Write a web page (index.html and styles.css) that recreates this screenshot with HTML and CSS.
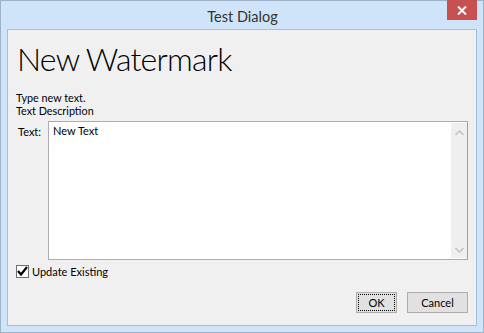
FILE: index.html
```html
<!DOCTYPE html>
<html>
<head>
<meta charset="utf-8">
<link rel="stylesheet" href="styles.css">
</head>
<body>
<div class="window">
  <div class="titlebar">
    <div class="title">Test Dialog</div>
    <div class="close"><svg width="10" height="9" viewBox="0 0 10 9"><path d="M1 0.5 L9 8.5 M9 0.5 L1 8.5" stroke="#fff" stroke-width="2"/></svg></div>
  </div>
  <div class="client">
    <h1 class="heading">New Watermark</h1>
    <div class="desc">
      <div class="line">Type new text.</div>
      <div class="line">Text Description</div>
    </div>
    <div class="field">
      <div class="label">Text:</div>
      <div class="textbox">
        <div class="content">New Text</div>
        <div class="scrollbar">
          <svg width="9" height="6" viewBox="0 0 9 6"><path d="M0.5 5 L4.5 1 L8.5 5" fill="none" stroke="#c4c4c4" stroke-width="1.6"/></svg>
          <svg width="9" height="6" viewBox="0 0 9 6"><path d="M0.5 1 L4.5 5 L8.5 1" fill="none" stroke="#c4c4c4" stroke-width="1.6"/></svg>
        </div>
      </div>
    </div>
    <label class="check">
      <span class="box"><svg width="11" height="10" viewBox="0 0 11 10"><path d="M1 5 L4 8.5 L10 1" fill="none" stroke="#000" stroke-width="2.2"/></svg></span>
      <span>Update Existing</span>
    </label>
    <div class="buttons">
      <div class="btn ok">OK</div>
      <div class="btn cancel">Cancel</div>
    </div>
  </div>
</div>
</body>
</html>
```
FILE: styles.css
```css
html, body {
  margin: 0;
  padding: 0;
  width: 484px;
  height: 333px;
  overflow: hidden;
  font-family: "Lato", "Open Sans", sans-serif;
  font-size: 11px;
  color: #000;
}
.window {
  box-sizing: border-box;
  width: 484px;
  height: 333px;
  background: #cfe4f8;
  border: 1px solid #9fb3c8;
  display: flex;
  flex-direction: column;
  padding: 0 6px 6px 6px;
}
.titlebar {
  height: 28px;
  display: flex;
  justify-content: center;
  align-items: center;
  position: relative;
}
.title {
  font-size: 14.5px;
  color: #333;
  margin-top: 2px;
  margin-left: 1px;
}
.close {
  position: absolute;
  right: 0;
  top: -1px;
  width: 30px;
  height: 20px;
  background: #c75050;
  display: flex;
  justify-content: center;
  align-items: center;
}
.client {
  flex: 1;
  background: #f0f0f0;
  border: 1px solid #a8bed5;
  padding: 0 8px 0 8px;
  display: flex;
  flex-direction: column;
}
.heading {
  margin: 9px 0 0 1px;
  font-weight: 300;
  font-size: 32px;
  line-height: 40px;
  letter-spacing: -0.8px;
  color: #000;
}
.desc {
  margin-top: 12px;
  display: flex;
  flex-direction: column;
  gap: 0.5px;
}
.line {
  height: 12.5px;
  line-height: 13px;
  font-size: 10.8px;
}
.field {
  display: flex;
  margin-top: 4px;
}
.label {
  width: 32px;
  padding: 4px 0 0 2px;
  box-sizing: border-box;
}
.textbox {
  box-sizing: border-box;
  width: 420px;
  height: 139px;
  border: 1px solid #abadb3;
  border-right-color: #a0a0a0;
  background: #fff;
  display: flex;
}
.content {
  flex: 1;
  padding: 2px 4px;
}
.scrollbar {
  width: 16px;
  margin: 1px 0 1px 0;
  background: #efefef;
  display: flex;
  flex-direction: column;
  justify-content: space-between;
  align-items: center;
  padding: 7px 0 5px;
}
.check {
  display: flex;
  align-items: center;
  margin-top: 5px;
  margin-left: 0;
}
.box {
  box-sizing: border-box;
  width: 13px;
  height: 13px;
  border: 1px solid #707070;
  background: #fff;
  display: flex;
  align-items: center;
  justify-content: center;
  margin-right: 3px;
}
.buttons {
  display: flex;
  justify-content: flex-end;
  gap: 10px;
  margin-top: 14px;
}
.btn {
  box-sizing: border-box;
  height: 21px;
  border: 1px solid #adadad;
  background: #e1e1e1;
  display: flex;
  align-items: center;
  justify-content: center;
}
.ok {
  width: 41px;
  outline: 1px dotted #000;
  outline-offset: -3px;
}
.cancel {
  width: 61px;
}
```
